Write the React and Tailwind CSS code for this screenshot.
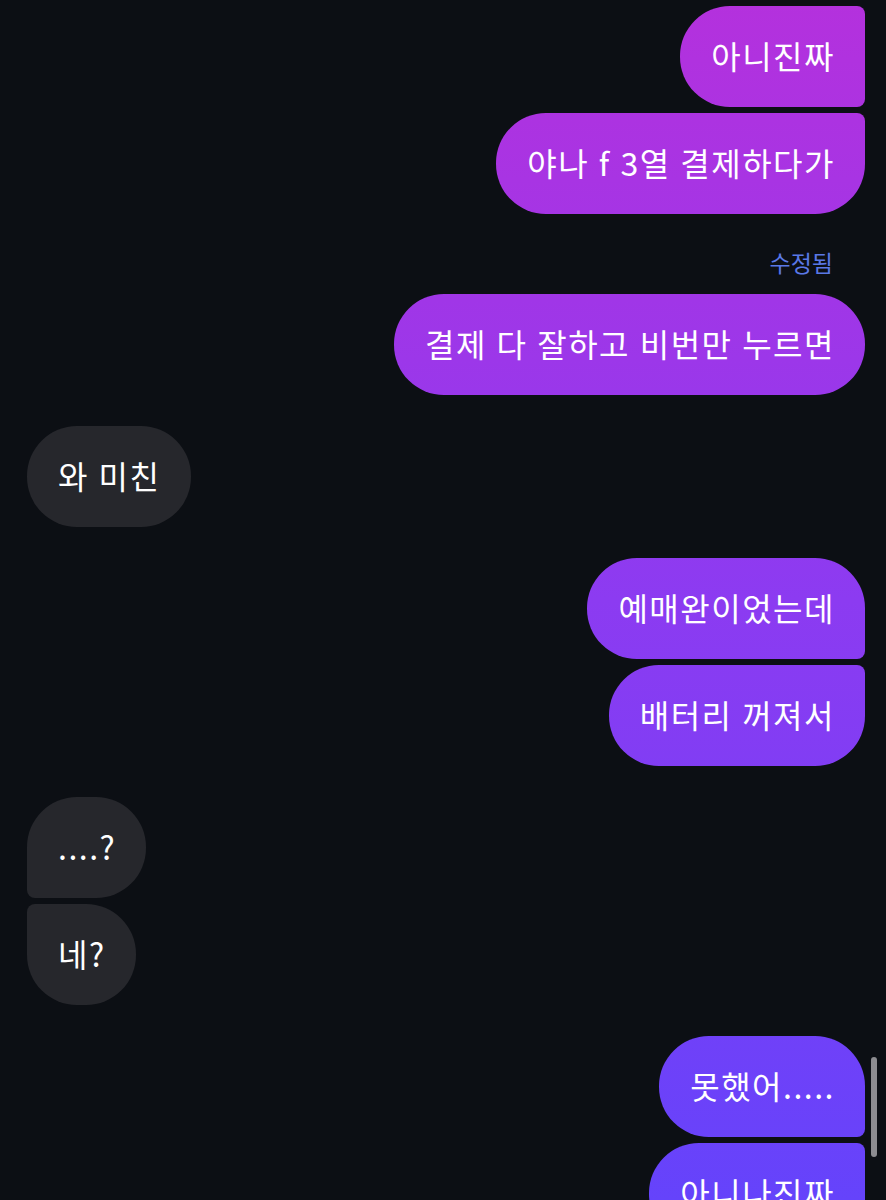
import React from "react";

const font = {
  fontFamily: '"Noto Sans CJK KR", "Noto Sans", sans-serif',
};

// 말풍선 그라데이션은 화면 전체 기준 (bg-fixed)
const mine =
  "bg-[linear-gradient(180deg,#b431dd_0%,#8c3bf1_50%,#6543fb_100%)] bg-fixed";

function Bubble({ text, side = "right", shape = "single" }) {
  const isMine = side === "right";
  let radius = "rounded-[50px]";
  if (isMine && shape === "first") radius = "rounded-l-[50px] rounded-tr-[50px] rounded-br-[8px]";
  if (isMine && shape === "middle") radius = "rounded-l-[50px] rounded-r-[8px]";
  if (isMine && shape === "last") radius = "rounded-l-[50px] rounded-tr-[8px] rounded-br-[50px]";
  if (!isMine && shape === "first") radius = "rounded-r-[50px] rounded-tl-[50px] rounded-bl-[8px]";
  if (!isMine && shape === "last") radius = "rounded-r-[50px] rounded-tl-[8px] rounded-bl-[50px]";

  return (
    <div className={`flex ${isMine ? "justify-end" : "justify-start"}`}>
      <div
        className={`h-[101px] flex items-center pb-[4px] pl-[31px] pr-[30px] text-[32px] tracking-[1.5px] [word-spacing:1px] leading-none text-white whitespace-nowrap ${radius} ${
          isMine ? mine : "bg-[#26272c]"
        }`}
      >
        {text}
      </div>
    </div>
  );
}

export default function App() {
  return (
    <div
      className="relative w-[886px] h-[1200px] overflow-hidden bg-[#0c0f14] pl-[27px] pr-[21px] pt-[6px]"
      style={font}
    >
      <div className="flex flex-col gap-[6px]">
        <Bubble text="아니진짜" shape="middle" />
        <Bubble text="야나 f 3열 결제하다가" shape="last" />
      </div>

      <div className="mt-[34px] mb-[17px] text-right pr-[32px] text-[23px] leading-[29px] text-[#5a78e6]">
        수정됨
      </div>

      <Bubble text="결제 다 잘하고 비번만 누르면" />

      <div className="mt-[31px]">
        <Bubble text="와 미친" side="left" />
      </div>

      <div className="mt-[31px] flex flex-col gap-[6px]">
        <Bubble text="예매완이었는데" shape="first" />
        <Bubble text="배터리 꺼져서" shape="last" />
      </div>

      <div className="mt-[31px] flex flex-col gap-[6px]">
        <Bubble text="....?" side="left" shape="first" />
        <Bubble text="네?" side="left" shape="last" />
      </div>

      <div className="mt-[31px] flex flex-col gap-[6px]">
        <Bubble text="못했어....." shape="first" />
        <Bubble text="아니나진짜" shape="middle" />
      </div>

      {/* 스크롤바 */}
      <div className="absolute right-[9px] top-[1057px] w-[6px] h-[100px] rounded-full bg-[#8c8c90]" />
    </div>
  );
}
